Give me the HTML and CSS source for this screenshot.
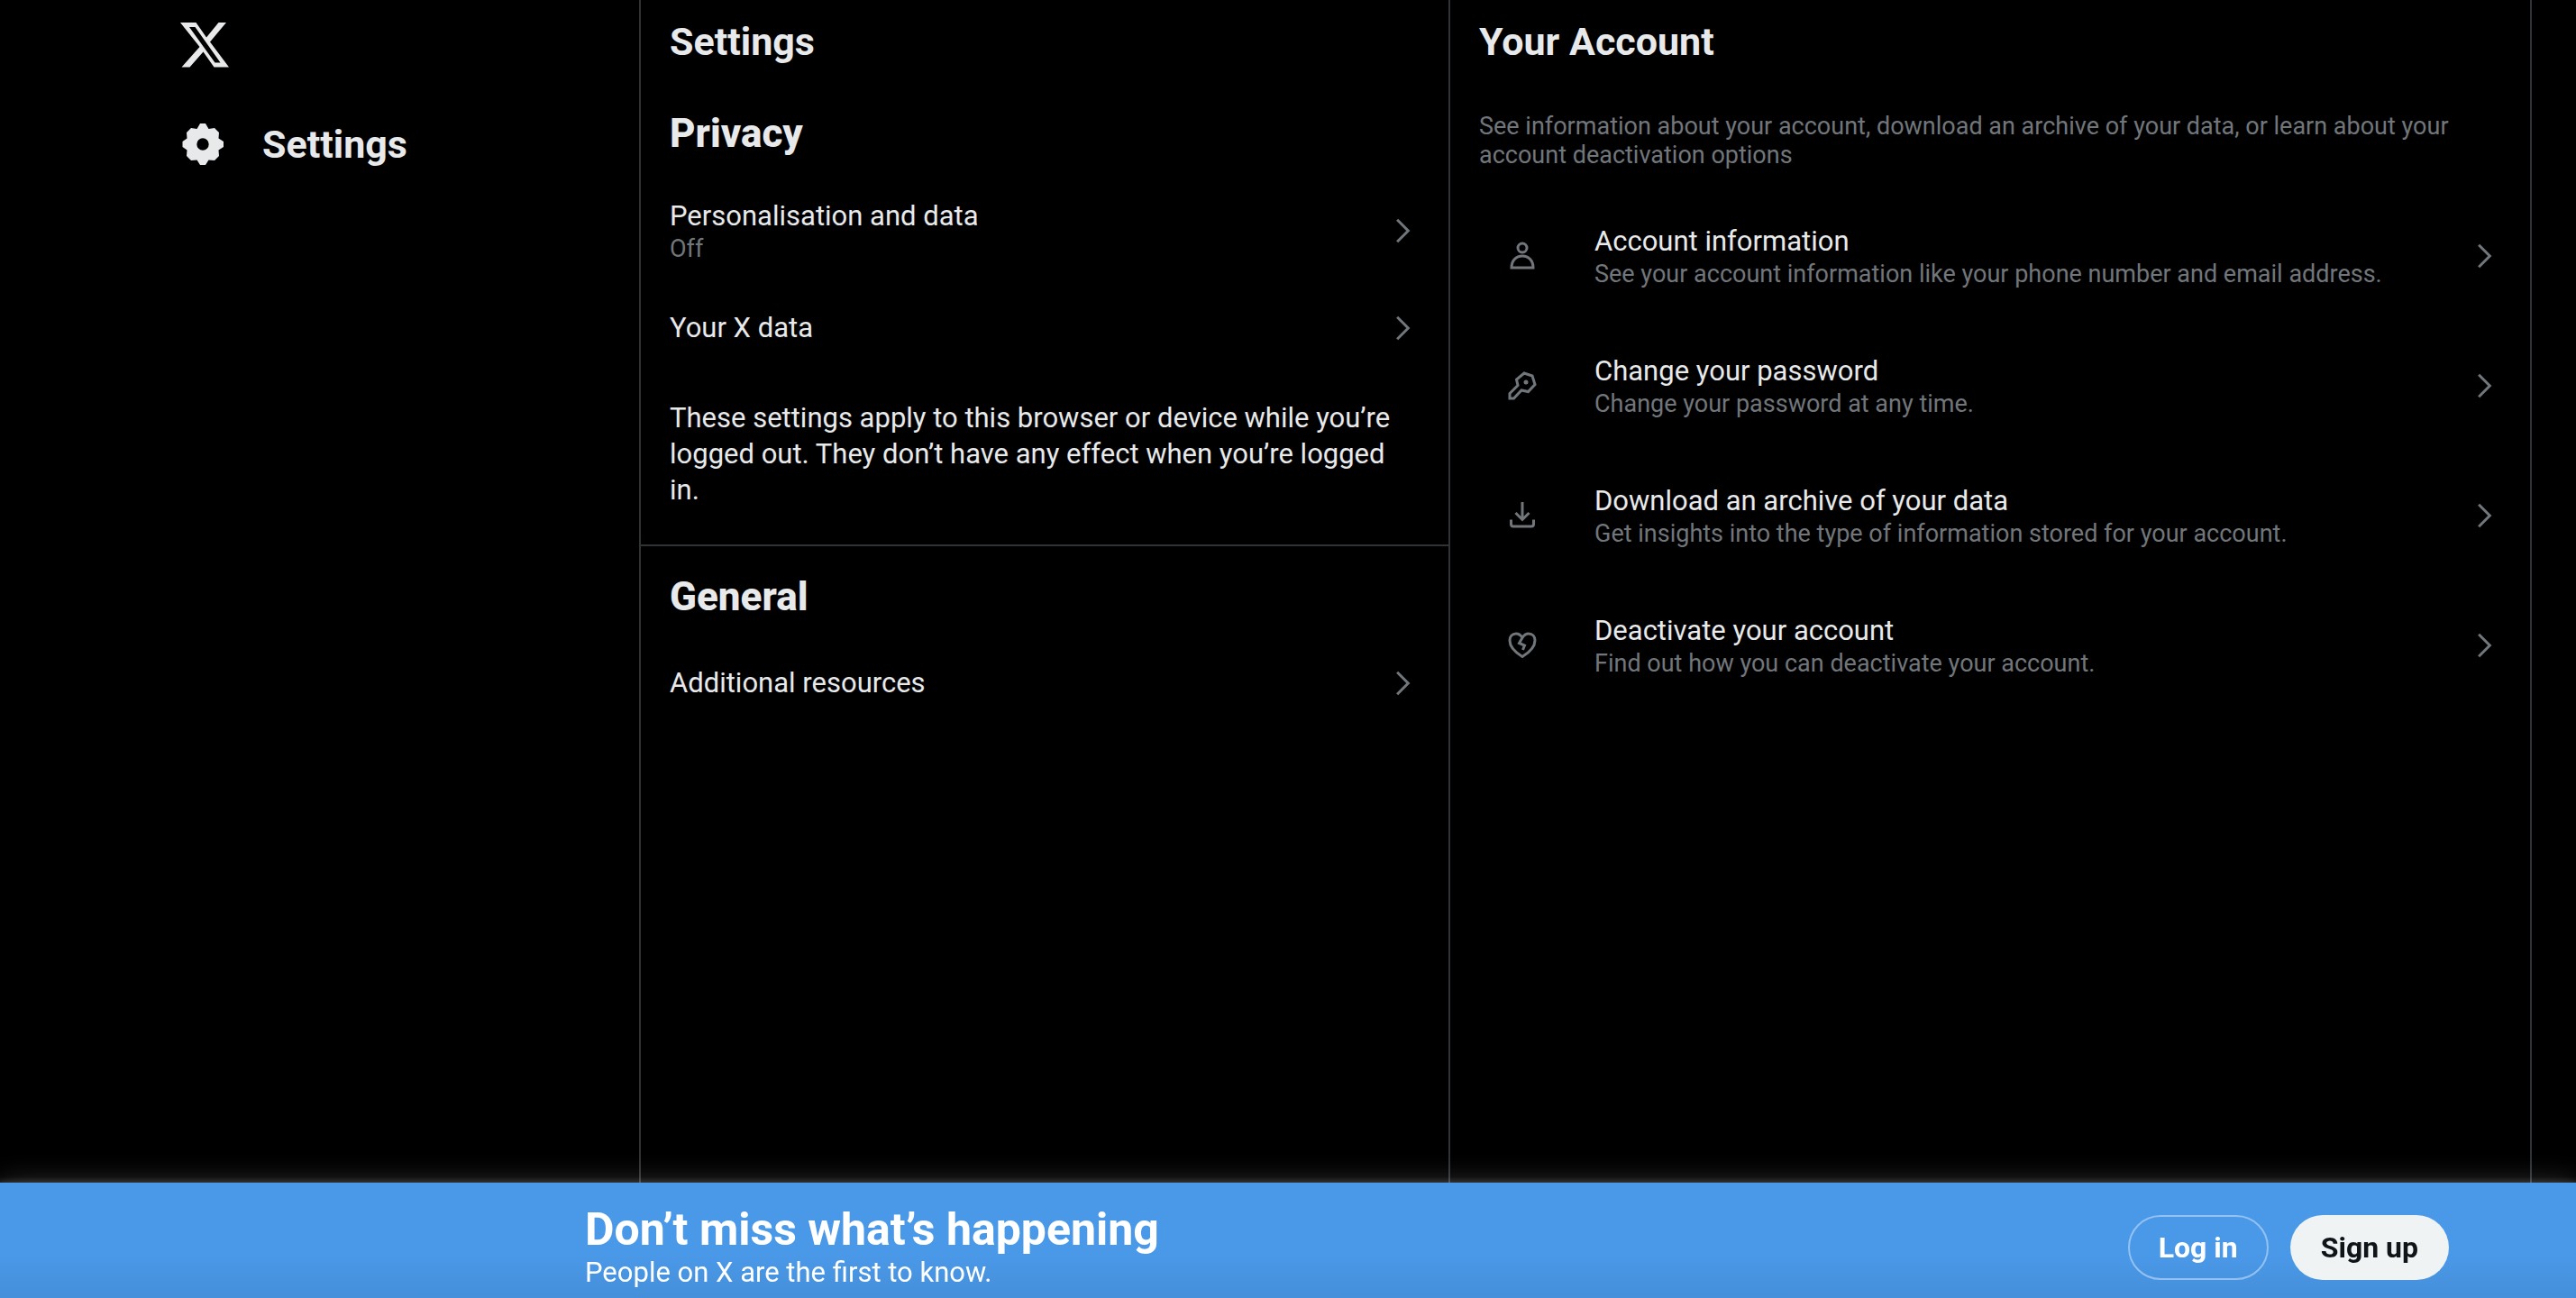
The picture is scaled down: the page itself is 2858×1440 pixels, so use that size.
FILE: index.html
```html
<!DOCTYPE html>
<html lang="en">
<head>
<meta charset="utf-8">
<title>Settings</title>
<link rel="stylesheet" href="styles.css">
</head>
<body>
<svg class="defs" aria-hidden="true">
  <symbol id="chevron" viewBox="0 0 24 24"><path d="M8.3 4.3 16 12l-7.7 7.7" fill="none" stroke="currentColor" stroke-width="1.9"/></symbol>
</svg>
<div class="layout">
  <header class="side">
    <nav class="nav" aria-label="Primary">
      <a class="logo" href="#" aria-label="X">
        <svg viewBox="0 0 60 60"><path fill-rule="evenodd" d="M3 5H20.5L32 21.5 45.5 5H54L36 26.5 57 54.5H40.5L28.5 37.500 13.5 54.5H4.5L24.5 32ZM13 10H19.5L47.5 49.5H41.5Z"/></svg>
      </a>
      <a class="nav-link" href="#">
        <svg class="gear" viewBox="0 0 48 48"><path fill-rule="evenodd" d="M21 1h6l3.500 6L37 6l5 5-.5 6.500 5.500 3.500v6l-5.500 3.500.5 6.500-5 5-6.500-.5L27 47h-6l-3.500-5.500L11 42l-5-5 .5-6.500L1.500 27v-6l5-3.500L6 11l5-5 6.500 1ZM24 17.300a6.700 6.700 0 1 0 0 13.400 6.700 6.700 0 0 0 0-13.400Z"/></svg>
        <span>Settings</span>
      </a>
    </nav>
  </header>
  <main class="main">
    <section class="column">
      <h1 class="title">Settings</h1>
      <h2 class="heading">Privacy</h2>
      <a class="row" href="#"><span class="row-text"><span class="row-title">Personalisation and data</span><span class="row-note">Off</span></span><svg class="chevron"><use href="#chevron"/></svg></a>
      <a class="row" href="#"><span class="row-text"><span class="row-title">Your X data</span></span><svg class="chevron"><use href="#chevron"/></svg></a>
      <p class="notice">These settings apply to this browser or device while you’re logged out. They don’t have any effect when you’re logged in.</p>
      <h2 class="heading">General</h2>
      <a class="row" href="#"><span class="row-text"><span class="row-title">Additional resources</span></span><svg class="chevron"><use href="#chevron"/></svg></a>
    </section>
    <section class="column">
      <h2 class="title">Your Account</h2>
      <p class="intro">See information about your account, download an archive of your data, or learn about your account deactivation options</p>
      <a class="row row-tall" href="#"><span class="row-icon"><svg viewBox="0 0 36 36"><circle cx="18" cy="9" r="5"/><path d="M6 31c0-8 5-13 12-13s12 5 12 13Z"/></svg></span><span class="row-text"><span class="row-title">Account information</span><span class="row-note">See your account information like your phone number and email address.</span></span><svg class="chevron"><use href="#chevron"/></svg></a>
      <a class="row row-tall" href="#"><span class="row-icon"><svg viewBox="0 0 36 36"><path d="m20 4 9 3 3 9.500-7.500 8-7.500-1.500L8.500 32H4v-5.500l9-9-1.500-6.500Z"/><circle class="dot" cx="22" cy="14" r="2.500"/></svg></span><span class="row-text"><span class="row-title">Change your password</span><span class="row-note">Change your password at any time.</span></span><svg class="chevron"><use href="#chevron"/></svg></a>
      <a class="row row-tall" href="#"><span class="row-icon"><svg viewBox="0 0 36 36"><path d="M18 3v19M10.500 15l7.500 7.500 7.500-7.500M5.500 22.500v5q0 2.500 2.500 2.500h20q2.500 0 2.500-2.500v-5"/></svg></span><span class="row-text"><span class="row-title">Download an archive of your data</span><span class="row-note">Get insights into the type of information stored for your account.</span></span><svg class="chevron"><use href="#chevron"/></svg></a>
      <a class="row row-tall" href="#"><span class="row-icon"><svg viewBox="0 0 36 36"><path d="M18 30.500C9 25 4 19 4 12.500 4 8 7 5 11 5c3 0 5.500 2 7 4.500C19.500 7 22 5 25 5c4 0 7 3 7 7.500C32 19 27 25 18 30.500ZM18 9.500l-3.500 6 6 2.500-2 5"/></svg></span><span class="row-text"><span class="row-title">Deactivate your account</span><span class="row-note">Find out how you can deactivate your account.</span></span><svg class="chevron"><use href="#chevron"/></svg></a>
    </section>
  </main>
</div>
<aside class="banner">
  <div class="banner-inner">
    <div class="banner-text">
      <p class="banner-title">Don’t miss what’s happening</p>
      <p class="banner-note">People on X are the first to know.</p>
    </div>
    <button class="button" type="button">Log in</button>
    <button class="button button-solid" type="button">Sign up</button>
  </div>
</aside>
</body>
</html>
```
FILE: styles.css
```css
* { box-sizing: border-box; }

body {
  margin: 0;
  background: #000;
  color: #e7e9ea;
  font: 31px/40px Roboto, "Liberation Sans", sans-serif;
}

h1, h2, p { margin: 0; }
a { color: inherit; text-decoration: none; }
.defs { position: absolute; width: 0; height: 0; }

.layout {
  display: flex;
  min-height: 100vh;
  padding-right: 49px;
}

.side {
  flex: 1;
  display: flex;
  justify-content: flex-end;
  border-right: 2px solid #2f3336;
}

.nav { width: 512px; }

.logo {
  display: block;
  width: 60px;
  height: 60px;
  margin-top: 20px;
}

.logo svg { display: block; fill: currentColor; }

.nav-link {
  display: flex;
  align-items: center;
  gap: 42px;
  margin-top: 56px;
  padding-left: 4px;
  font-size: 43px;
  line-height: 48px;
  font-weight: 700;
}

.gear { width: 48px; height: 48px; fill: currentColor; }

.main {
  flex: 0 1 2098px;
  display: grid;
  grid-template-columns: 449fr 600fr;
}

.column { border-right: 2px solid #2f3336; }

.title, .heading {
  padding: 24px 32px;
  font-size: 43px;
  line-height: 48px;
  font-weight: 700;
}

.title { padding: 22px 32px 30px; }
.heading { font-size: 44px; font-weight: 800; }

.row {
  display: flex;
  align-items: center;
  min-height: 96px;
  padding: 24px 32px;
}

.row-tall { min-height: 144px; }
.row-text { flex: 1; display: grid; }

.row-note, .intro {
  font-size: 27px;
  line-height: 32px;
  color: #71767b;
}

.chevron { width: 38px; height: 38px; color: #71767b; }

.row-icon {
  display: flex;
  justify-content: center;
  width: 96px;
  margin-right: 32px;
}

.row-icon svg {
  width: 36px;
  height: 36px;
  fill: none;
  stroke: #71767b;
  stroke-width: 3;
}

.row-icon .dot { fill: #71767b; stroke: none; }

.notice {
  padding: 32px 40px 40px 32px;
  margin-bottom: 8px;
  border-bottom: 2px solid #2f3336;
}

.intro { padding: 24px 32px; }

.banner {
  position: fixed;
  inset: auto 0 0;
  padding-right: 141px;
  background: linear-gradient(#4a99e9 60%, #458fda);
  color: #fff;
  box-shadow: 0 0 30px rgba(255, 255, 255, 0.2), 0 0 6px 2px rgba(255, 255, 255, 0.15);
}

.banner-inner {
  display: flex;
  align-items: center;
  gap: 24px;
  max-width: 2068px;
  min-height: 128px;
  margin-left: auto;
  padding-top: 16px;
}

.banner-text { flex: 1; }

.banner-title {
  font-size: 50px;
  line-height: 56px;
  font-weight: 700;
}

.button {
  height: 72px;
  padding: 0 32px;
  border: 2px solid #93c2f2;
  border-radius: 36px;
  background: transparent;
  color: #fff;
  font: 700 32px/40px Roboto, "Liberation Sans", sans-serif;
}

.button-solid {
  border-color: transparent;
  background: #eff3f4 border-box;
  color: #0f1419;
}
```
